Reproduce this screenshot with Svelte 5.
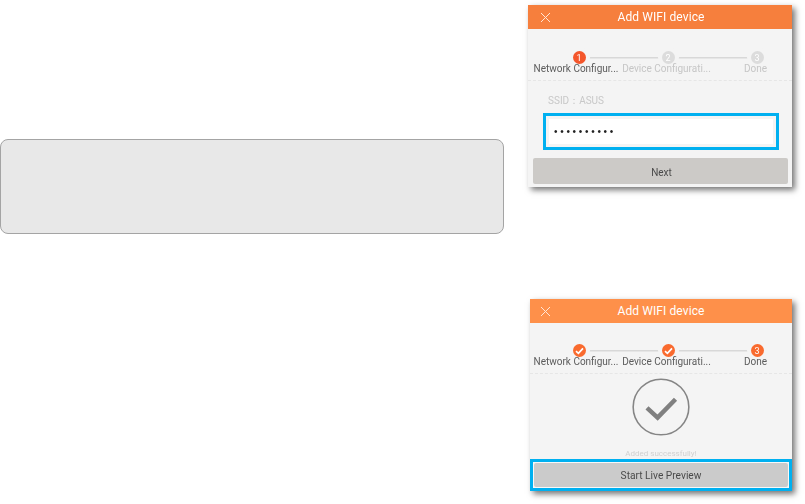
<script>
  const steps1 = [
    { label: 'Network Configur...', state: 'active', n: 1 },
    { label: 'Device Configurati...', state: 'todo', n: 2 },
    { label: 'Done', state: 'todo', n: 3 }
  ];
  const steps2 = [
    { label: 'Network Configur...', state: 'done', n: 1 },
    { label: 'Device Configurati...', state: 'done', n: 2 },
    { label: 'Done', state: 'active', n: 3 }
  ];
</script>

{#snippet closeIcon()}
  <svg class="close" width="11" height="11" viewBox="0 0 11 11"><path d="M1 1l9 9M10 1l-9 9" stroke="#ffe6d6" stroke-width="1" fill="none"/></svg>
{/snippet}

{#snippet stepper(steps)}
  <div class="stepper">
    <div class="rail"></div>
    {#each steps as s}
      <div class="step {s.state}">
        <span class="dot">
          {#if s.state === 'done'}
            <svg width="9" height="8" viewBox="0 0 9 8"><path d="M1 4.2l2.4 2.2L8 1.4" stroke="#fff" stroke-width="1.7" fill="none"/></svg>
          {:else}
            {s.n}
          {/if}
        </span>
        <span class="label">{s.label}</span>
      </div>
    {/each}
  </div>
{/snippet}

<div class="page">
  <div class="left">
    <div class="note"></div>
  </div>
  <div class="right">
    <section class="phone one">
      <header class="head">{@render closeIcon()}<span>Add WIFI device</span></header>
      {@render stepper(steps1)}
      <div class="ssid">SSID：ASUS</div>
      <div class="hl-input">
        <div class="input">••••••••••</div>
      </div>
      <button class="btn next">Next</button>
    </section>

    <section class="phone two">
      <header class="head">{@render closeIcon()}<span>Add WIFI device</span></header>
      {@render stepper(steps2)}
      <div class="result">
        <svg width="60" height="60" viewBox="0 0 60 60">
          <circle cx="30" cy="30" r="28.8" fill="none" stroke="#858585" stroke-width="1.6"/>
          <path d="M15.5 31l11 10L45 22" fill="none" stroke="#808080" stroke-width="4.6"/>
        </svg>
        <div class="ok">Added successfully!</div>
      </div>
      <div class="hl-btn">
        <button class="btn live">Start Live Preview</button>
      </div>
    </section>
  </div>
</div>

<style>
  :global(body) { margin: 0; background: #fff; }
  .page {
    width: 805px;
    height: 504px;
    display: flex;
    overflow: hidden;
    font-family: Roboto, "Liberation Sans", sans-serif;
  }
  .left { width: 504px; padding-top: 139px; box-sizing: border-box; flex: none; }
  .note {
    height: 95px;
    box-sizing: border-box;
    background: #e8e8e8;
    border: 1px solid #a4a4a4;
    border-radius: 8px;
  }
  .right { margin-left: 24px; width: 264px; padding-top: 5px; flex: none; }
  .phone {
    background: #f4f4f4;
    box-shadow: 3px 3px 6px rgba(0, 0, 0, 0.55);
    display: flex;
    flex-direction: column;
    filter: blur(0.3px);
  }
  .one { height: 182px; }
  .two { height: 192px; margin-top: 112px; margin-left: 2px; }
  .head {
    height: 24px;
    flex: none;
    display: flex;
    align-items: center;
    justify-content: center;
    position: relative;
    color: #fff;
    font-size: 12px;
    letter-spacing: 0.1px;
  }
  .one .head { background: #f67f3d; padding-left: 2px; }
  .two .head { background: #fe904a; }
  .close { position: absolute; left: 12px; top: 7px; }
  .two .close { left: 10px; }
  .stepper {
    position: relative;
    height: 51px;
    box-sizing: border-box;
    display: flex;
    border-bottom: 1px dashed #e6e6e6;
    padding-top: 21px;
  }
  .one .stepper { margin-top: 1px; padding-left: 6.5px; }
  .two .stepper { padding-left: 4.5px; }
  .rail {
    position: absolute;
    left: 50px;
    width: 180px;
    top: 27px;
    height: 1px;
    background: #d8d8d8;
    box-shadow: 0 1px 0 #e6e6e6;
  }
  .step {
    position: relative;
    flex: none;
    width: 89px;
    display: flex;
    flex-direction: column;
    align-items: center;
    white-space: nowrap;
    font-size: 10px;
    line-height: 12px;
  }
  .dot {
    width: 13px;
    height: 13px;
    border-radius: 50%;
    display: flex;
    align-items: center;
    justify-content: center;
    color: #fff;
    font-size: 9px;
    box-shadow: 0 0 0 4px #f4f4f4;
  }
  .active .dot { background: #f4562b; }
  .done .dot { background: #f96a2e; }
  .todo .dot { background: #dcdcdc; }
  .two .active .dot { background: #f96a2e; }
  .label { color: #5c5c5c; margin-top: -1px; margin-right: 3px; }
  .step:nth-child(2) .label { margin-right: 6px; }
  .todo .label { color: #c6c6c6; }
  .ssid {
    margin: 14px 0 0 20px;
    font-size: 10px;
    line-height: 12px;
    color: #c8c8c8;
  }
  .hl-input {
    margin: 6px 13px 0 15px;
    height: 37px;
    box-sizing: border-box;
    border: 3px solid #00b0f0;
    padding: 3px 3px;
    background: #f4f4f4;
  }
  .input {
    height: 25px;
    background: #fff;
    color: #222;
    font-size: 10px;
    line-height: 25px;
    padding-left: 5px;
    letter-spacing: 2.7px;
    font-family: "Liberation Sans", sans-serif;
  }
  .btn {
    display: block;
    border: none;
    border-radius: 2px;
    background: #cccac7;
    color: #4a4a4a;
    font-family: inherit;
    font-size: 10px;
    padding: 2px 0 0 2px;
  }
  .next { margin: 8px 4px 0 5px; height: 26px; width: 255px; }
  .result {
    flex: 1;
    display: flex;
    flex-direction: column;
    align-items: center;
    padding-top: 4px;
    min-height: 0;
  }
  .ok { font-size: 8px; line-height: 10px; color: #d0d0d0; margin-top: 13px; }
  .hl-btn {
    height: 32px;
    box-sizing: border-box;
    border: 3px solid #00b0f0;
    background: #f8f8f8;
    padding: 1px;
  }
  .live { width: 100%; height: 100%; background: #cbcbcb; padding: 0; font-size: 10.2px; }
</style>
